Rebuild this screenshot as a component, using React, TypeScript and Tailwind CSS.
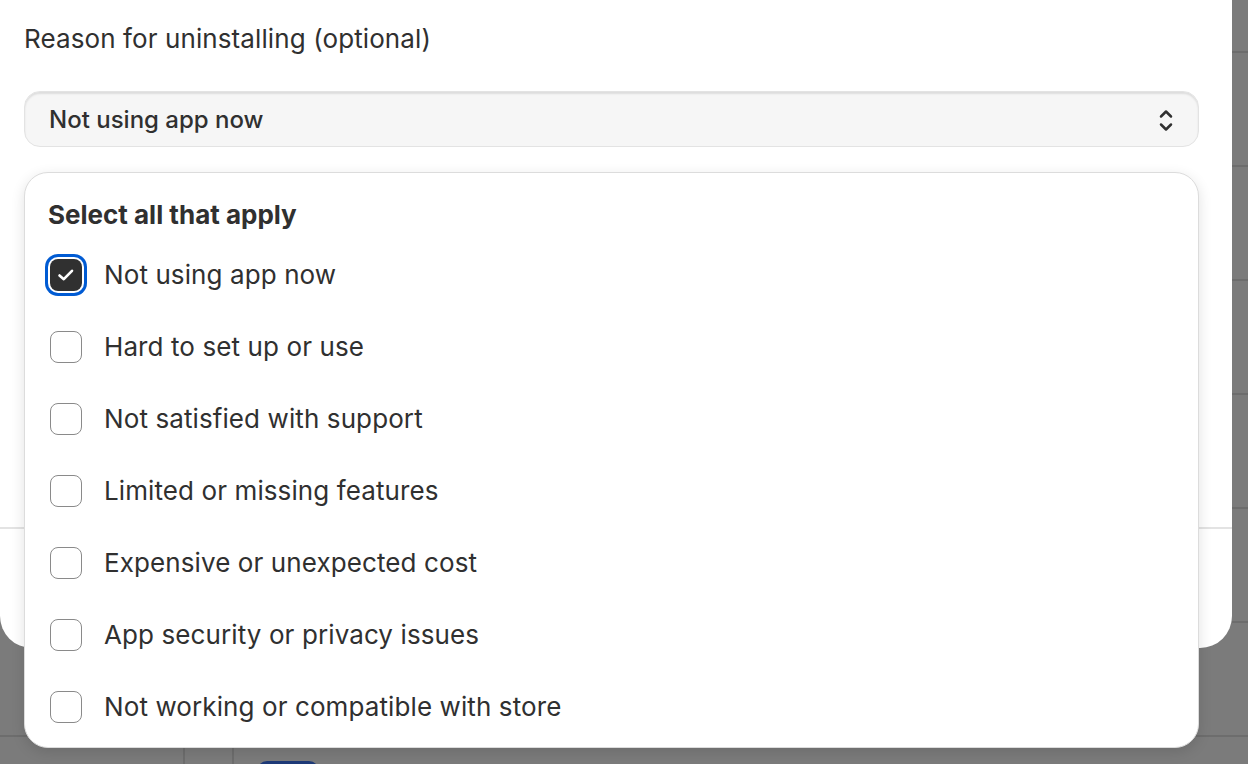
import React from "react";

const options = [
  { label: "Not using app now", checked: true },
  { label: "Hard to set up or use", checked: false },
  { label: "Not satisfied with support", checked: false },
  { label: "Limited or missing features", checked: false },
  { label: "Expensive or unexpected cost", checked: false },
  { label: "App security or privacy issues", checked: false },
  { label: "Not working or compatible with store", checked: false },
];

function Checkbox({ checked }: { checked: boolean }) {
  if (checked) {
    return (
      <div className="w-8 h-8 rounded-[8px] bg-[#303030] flex items-center justify-center ring-[3px] ring-[#005bd3] ring-offset-[2px] ring-offset-white shrink-0">
        <svg width="18" height="14" viewBox="0 0 18 14" fill="none">
          <path d="M2.5 7.5 L6.8 11.2 L15 2.8" stroke="white" strokeWidth="2.6" strokeLinecap="round" strokeLinejoin="round" />
        </svg>
      </div>
    );
  }
  return <div className="w-8 h-8 rounded-[8px] border-[1.5px] border-[#8a8a8a] bg-white shrink-0" />;
}

export default function App() {
  return (
    <div
      className="relative w-[1248px] h-[764px] overflow-hidden bg-[#7b7b7b] text-[#303030]"
      style={{ fontFamily: "Inter, 'Noto Sans', sans-serif" }}
    >
      {/* underlying page (dimmed) */}
      <div className="absolute inset-0 flex flex-col">
        <div className="h-[53px] shrink-0 border-b-2 border-[#6d6d6d]" />
        <div className="h-[114px] shrink-0 border-b-2 border-[#6d6d6d]" />
        <div className="h-[114px] shrink-0 border-b-2 border-[#6d6d6d]" />
        <div className="h-[114px] shrink-0 border-b-2 border-[#6d6d6d]" />
        <div className="h-[114px] shrink-0 border-b-2 border-[#6d6d6d]" />
        <div className="h-[114px] shrink-0 border-b-2 border-[#6d6d6d]" />
        <div className="h-[114px] shrink-0 border-b-2 border-[#6d6d6d]" />
        <div className="flex-1 flex">
          <div className="w-[185px] shrink-0 border-r-2 border-[#6d6d6d]" />
          <div className="w-[49px] shrink-0 border-r-2 border-[#6d6d6d]" />
          <div className="pl-[23px] pt-[24px]">
            <div className="w-[62px] h-[30px] rounded-[10px] bg-[#1e3a78]" />
          </div>
        </div>
      </div>

      {/* modal */}
      <div className="absolute left-0 top-0 w-[1232px] h-[648px] bg-white rounded-b-[32px] flex flex-col">
        <div className="flex-1 px-6 pt-[19px]">
          <div className="text-[26px] leading-[40px] tracking-[0.1px]">Reason for uninstalling (optional)</div>
          <div className="mt-8 h-[56px] w-[1175px] rounded-[16px] bg-[#f6f6f6] border border-[#e3e3e3] shadow-[inset_0_2px_2px_rgba(0,0,0,0.10)] flex items-center justify-between pl-6 pr-6">
            <span className="text-[24px] leading-[36px] font-[550] pt-[2px]">Not using app now</span>
            <svg width="16" height="28" viewBox="0 0 16 28" fill="none">
              <path d="M3 11.5 L8 6.5 L13 11.5" stroke="#303030" strokeWidth="2.5" strokeLinecap="round" strokeLinejoin="round" />
              <path d="M3 19.5 L8 24.5 L13 19.5" stroke="#303030" strokeWidth="2.5" strokeLinecap="round" strokeLinejoin="round" />
            </svg>
          </div>
        </div>
        <div className="h-[121px] border-t-2 border-[#e3e3e3]" />
      </div>

      {/* popover */}
      <div className="absolute left-6 top-[172px] w-[1175px] bg-white rounded-[24px] border border-[#dcdcdc] shadow-[0_4px_14px_rgba(0,0,0,0.12)] pt-[22px] pb-[4px] px-[23px]">
        <div className="text-[26px] leading-[40px] font-[650]">Select all that apply</div>
        <div className="mt-[4px] flex flex-col">
          {options.map((o) => (
            <div key={o.label} className="h-[72px] flex items-center pl-[2px] gap-[22px]">
              <Checkbox checked={o.checked} />
              <span className="text-[26px] leading-[40px] tracking-[0.1px]">{o.label}</span>
            </div>
          ))}
        </div>
      </div>
    </div>
  );
}
